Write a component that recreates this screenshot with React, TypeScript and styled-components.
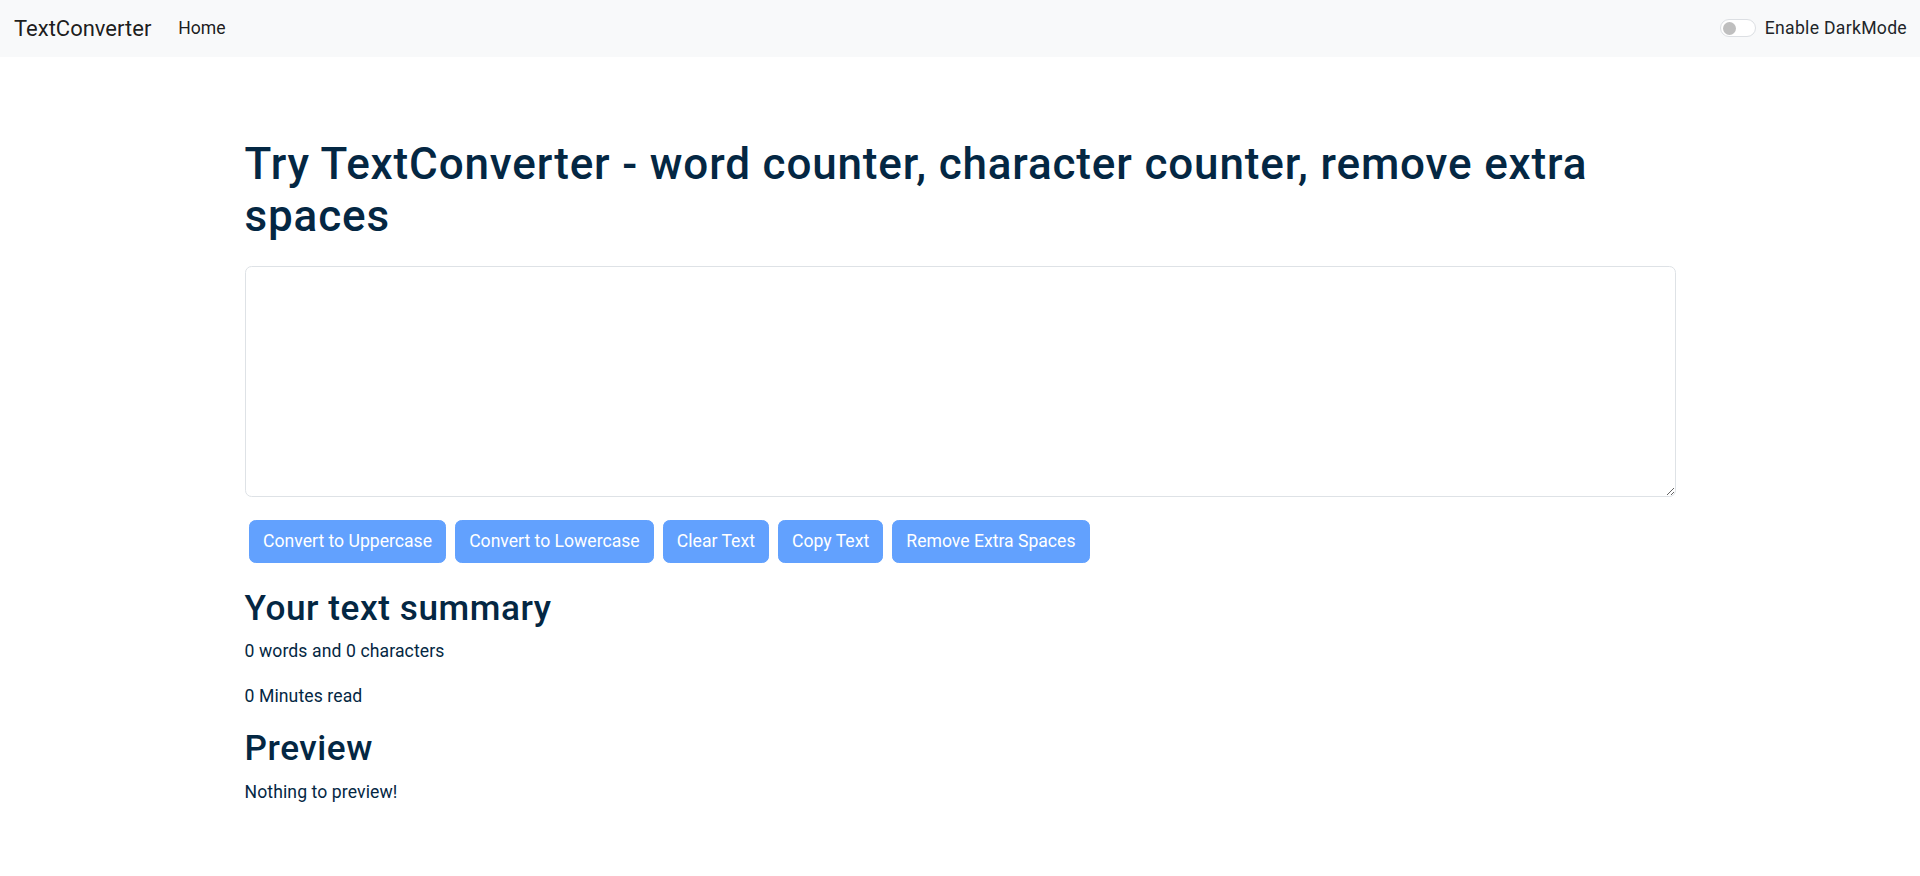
import React, { useState } from "react";
import styled, { createGlobalStyle } from "styled-components";

const GlobalStyle = createGlobalStyle`
  *, *::before, *::after { box-sizing: border-box; }
  html, body {
    margin: 0;
    padding: 0;
    background: #ffffff;
  }
  body {
    font-family: Roboto, "Noto Sans", "Liberation Sans", sans-serif;
    font-size: 17.6px;
    line-height: 1.5;
    color: #212529;
  }
`;

const Navbar = styled.nav`
  height: 57px;
  background: #f8f9fa;
  display: flex;
  align-items: center;
  padding: 0 13px 0 14px;
`;

const Brand = styled.a`
  font-size: 22px;
  line-height: 33px;
  color: rgba(0, 0, 0, 0.9);
  text-decoration: none;
  margin-right: 18px;
`;

const NavList = styled.ul`
  list-style: none;
  margin: 0;
  padding: 0;
  display: flex;
`;

const NavLink = styled.a<{ $active?: boolean }>`
  display: block;
  padding: 8.8px;
  font-size: 17.6px;
  color: ${(p) => (p.$active ? "rgba(0,0,0,0.9)" : "rgba(0,0,0,0.55)")};
  text-decoration: none;
`;

const SwitchWrap = styled.label`
  margin-left: auto;
  display: flex;
  align-items: center;
  gap: 8.5px;
  font-size: 17.6px;
  letter-spacing: 0.3px;
  color: #212529;
  cursor: pointer;
`;

const SwitchTrack = styled.span<{ $on: boolean }>`
  position: relative;
  width: 36px;
  height: 18px;
  border-radius: 9px;
  border: 1.1px solid ${(p) => (p.$on ? "#0d6efd" : "#dcdfe3")};
  background: ${(p) => (p.$on ? "#0d6efd" : "#ffffff")};
  flex: none;
`;

const SwitchKnob = styled.span<{ $on: boolean }>`
  position: absolute;
  top: 1.3px;
  left: ${(p) => (p.$on ? "19px" : "1.3px")};
  width: 13.2px;
  height: 13.2px;
  border-radius: 50%;
  background: ${(p) => (p.$on ? "#ffffff" : "#bfbfbf")};
`;

const HiddenInput = styled.input`
  display: none;
`;

const Main = styled.main`
  width: 1431px;
  margin: 0 auto;
  padding-top: 80.5px;
  color: #042743;
`;

const Title = styled.h1`
  font-size: 44px;
  font-weight: 500;
  line-height: 1.2;
  letter-spacing: 0.85px;
  margin: 0 0 23px;
  color: #042743;
`;

const TextBox = styled.textarea`
  display: block;
  width: 100%;
  height: 231px;
  border: 1.1px solid #dee2e6;
  border-radius: 6.6px;
  padding: 6.6px 13.2px;
  font-family: inherit;
  font-size: 17.6px;
  color: #212529;
  background: #ffffff;
  margin: 0 0 18.6px;
  outline: none;
`;

const ButtonRow = styled.div`
  display: flex;
  flex-wrap: wrap;
  gap: 8.8px;
  padding: 4.4px;
`;

const ActionButton = styled.button`
  height: 43px;
  padding: 0 13.2px;
  font-family: inherit;
  font-size: 17.6px;
  line-height: 1.5;
  color: #ffffff;
  background: #62a1fe;
  border: 1.1px solid #62a1fe;
  border-radius: 6.6px;
  cursor: default;
`;

const Section = styled.section`
  margin-top: 19.5px;
`;

const SubTitle = styled.h2<{ $top?: number; $bottom?: number }>`
  font-size: 35.2px;
  font-weight: 500;
  line-height: 1.2;
  letter-spacing: 0.55px;
  margin: ${(p) => p.$top ?? 0}px 0 ${(p) => p.$bottom ?? 8.8}px;
  color: #042743;
`;

const Para = styled.p`
  margin: 0 0 18.2px;
  font-size: 17.6px;
  line-height: 1.5;
  letter-spacing: 0.1px;
  color: #042743;
`;

export default function App() {
  const [dark, setDark] = useState(false);
  const [text, setText] = useState("");
  const words = text.split(/\s+/).filter((w) => w.length > 0).length;
  const buttons = [
    "Convert to Uppercase",
    "Convert to Lowercase",
    "Clear Text",
    "Copy Text",
    "Remove Extra Spaces",
  ];
  return (
    <>
      <GlobalStyle />
      <Navbar>
        <Brand href="#">TextConverter</Brand>
        <NavList>
          <li>
            <NavLink href="#" $active>
              Home
            </NavLink>
          </li>
        </NavList>
        <SwitchWrap>
          <HiddenInput
            type="checkbox"
            checked={dark}
            onChange={() => setDark(!dark)}
          />
          <SwitchTrack $on={dark}>
            <SwitchKnob $on={dark} />
          </SwitchTrack>
          Enable DarkMode
        </SwitchWrap>
      </Navbar>
      <Main>
        <Title>
          Try TextConverter - word counter, character counter, remove extra
          spaces
        </Title>
        <TextBox value={text} onChange={(e) => setText(e.target.value)} />
        <ButtonRow>
          {buttons.map((b) => (
            <ActionButton key={b} disabled={text.length === 0}>
              {b}
            </ActionButton>
          ))}
        </ButtonRow>
        <Section>
          <SubTitle $top={0}>Your text summary</SubTitle>
          <Para>
            {words} words and {text.length} characters
          </Para>
          <Para>{0.008 * words} Minutes read</Para>
          <SubTitle $top={4.5} $bottom={10}>
            Preview
          </SubTitle>
          <Para>{text.length > 0 ? text : "Nothing to preview!"}</Para>
        </Section>
      </Main>
    </>
  );
}
